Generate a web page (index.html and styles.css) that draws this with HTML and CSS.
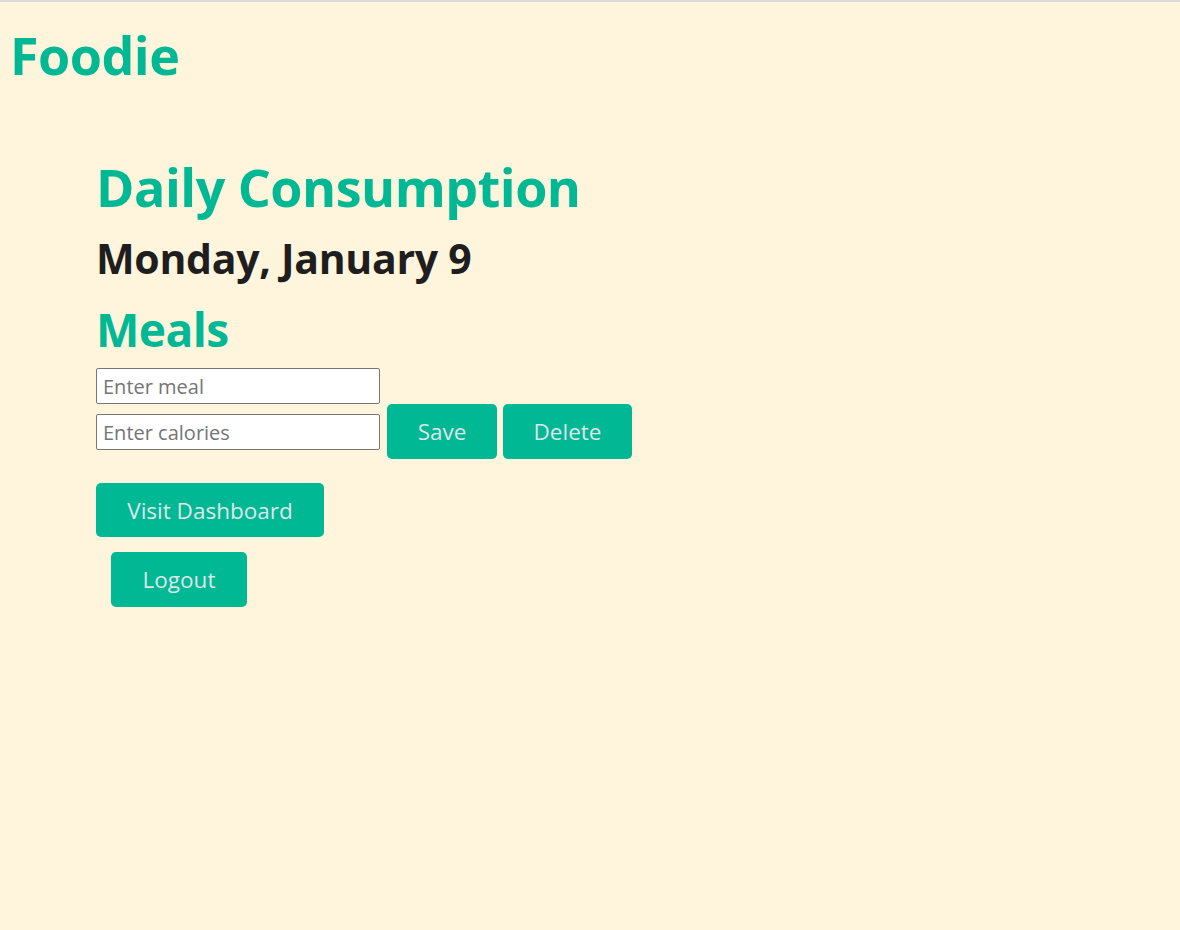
FILE: index.html
```html
<!DOCTYPE html>
<html lang="en">
<head>
<meta charset="utf-8">
<title>Foodie</title>
<link rel="stylesheet" href="styles.css">
</head>
<body>
<header class="site-header">
  <h1 class="logo">Foodie</h1>
</header>
<main class="page">
  <h2 class="title">Daily Consumption</h2>
  <h3 class="date">Monday, January 9</h3>
  <h3 class="section">Meals</h3>
  <form class="meal-form">
    <div class="row">
      <input class="field" type="text" placeholder="Enter meal">
    </div>
    <div class="row row-actions">
      <input class="field" type="text" placeholder="Enter calories">
      <button class="btn btn-save" type="button">Save</button>
      <button class="btn btn-delete" type="button">Delete</button>
    </div>
  </form>
  <div class="nav-row">
    <button class="btn btn-dash" type="button">Visit Dashboard</button>
  </div>
  <div class="nav-row nav-logout">
    <button class="btn btn-logout" type="button">Logout</button>
  </div>
</main>
</body>
</html>
```

FILE: styles.css
```css
html, body {
  margin: 0;
  padding: 0;
}
body {
  background: #fff5dd;
  border-top: 2px solid #dcdcdc;
  min-height: 928px;
  font-family: "Open Sans", "Noto Sans", sans-serif;
  color: #1e1e1e;
}
.site-header {
  padding-left: 10px;
}
.logo {
  margin: 0;
  padding-top: 18px;
  font-size: 52px;
  line-height: 70px;
  font-weight: 700;
  color: #00b894;
  letter-spacing: -0.5px;
}
.page {
  padding-left: 96px;
  padding-top: 63px;
}
.title {
  margin: 0;
  font-size: 52px;
  line-height: 68px;
  font-weight: 700;
  color: #00b894;
  letter-spacing: -0.5px;
}
.date {
  margin: 8px 0 0;
  font-size: 41px;
  line-height: 58px;
  font-weight: 700;
  color: #1e1e1e;
  letter-spacing: -0.3px;
}
.section {
  margin: 10px 0 0;
  font-size: 46px;
  line-height: 64px;
  font-weight: 700;
  color: #00b894;
  letter-spacing: -0.5px;
}
.meal-form {
  display: flex;
  flex-direction: column;
  margin-top: 7px;
}
.row {
  display: flex;
}
.row-actions {
  align-items: flex-end;
}
.field {
  box-sizing: border-box;
  width: 284px;
  height: 36px;
  margin: 0;
  padding: 0 6px;
  border: 1px solid #767676;
  border-radius: 2px;
  background: #fff;
  font-family: inherit;
  font-size: 20px;
  color: #1e1e1e;
}
.field::placeholder {
  color: #757575;
}
.row-actions .field {
  margin-bottom: 9px;
}
.btn {
  box-sizing: border-box;
  height: 55px;
  border: none;
  border-radius: 5px;
  background: #00b894;
  color: #dfe6e9;
  font-family: inherit;
  font-size: 22.5px;
  cursor: pointer;
}
.btn-save {
  width: 110px;
  margin-left: 7px;
}
.btn-delete {
  width: 129px;
  margin-left: 6px;
}
.nav-row {
  display: flex;
  margin-top: 24px;
}
.btn-dash {
  width: 228px;
  height: 54px;
}
.nav-logout {
  margin-top: 15px;
  padding-left: 15px;
}
.btn-logout {
  width: 136px;
}
```
